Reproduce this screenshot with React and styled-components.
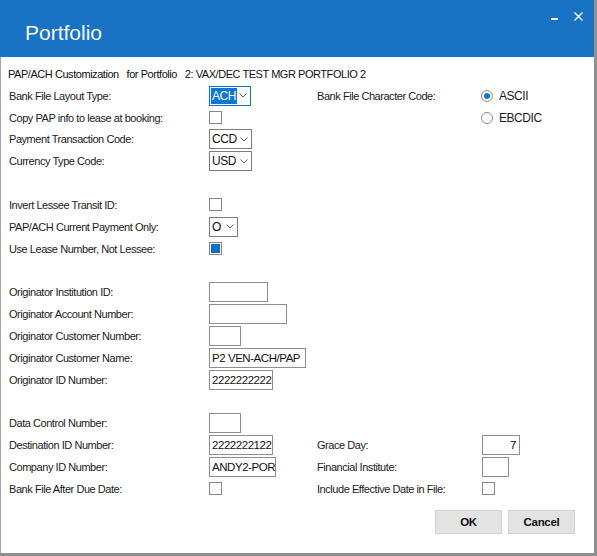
import React from 'react';
import styled, { createGlobalStyle } from 'styled-components';

const GlobalStyle = createGlobalStyle`
  html, body {
    margin: 0;
    padding: 0;
    background: #ffffff;
  }
  body {
    font-family: "Liberation Sans", Arial, sans-serif;
    font-size: 11px;
    letter-spacing: -0.45px;
    color: #1b1b1b;
  }
`;

const Window = styled.div`
  width: 597px;
  height: 556px;
  box-sizing: border-box;
  display: flex;
  flex-direction: column;
  border-right: 3px solid #8f8f8f;
  border-bottom: 3px solid #8f8f8f;
  background: #fff;
`;

const TitleBar = styled.div`
  height: 57px;
  flex: none;
  background: #1873c4;
  display: flex;
  justify-content: space-between;
  align-items: flex-start;
`;

const Title = styled.div`
  font-size: 21px;
  line-height: 24px;
  letter-spacing: 0;
  color: #f4f8fc;
  padding: 21px 0 0 25px;
`;

const WindowButtons = styled.div`
  display: flex;
  align-items: flex-start;
  gap: 16px;
  padding: 12px 11px 0 0;
`;

const Minimize = styled.span`
  display: block;
  width: 7px;
  height: 2px;
  margin-top: 6px;
  background: #ffffff;
`;

const Body = styled.div`
  flex: 1;
  border-left: 1px solid #a3a3a3;
  padding: 6px 19px 0 7px;
`;

const Row = styled.div`
  display: grid;
  grid-template-columns: 201px 107px 166px 1fr;
  align-items: center;
  height: 21.83px;
  white-space: nowrap;
`;

const HeaderLine = styled.div`
  display: flex;
  align-items: center;
  height: 21.83px;
  white-space: pre;
  color: #111;
`;

const Label = styled.span`
  padding-left: 1px;
`;

const SelectBox = styled.div`
  box-sizing: border-box;
  width: ${p => p.$w}px;
  height: 20px;
  border: 1px solid ${p => (p.$focused ? '#0a78d4' : '#7c7c7c')};
  display: flex;
  align-items: center;
  justify-content: space-between;
  padding: 0 3px 0 1px;
  background: #fff;
  font-size: 12px;
`;

const SelectValue = styled.span`
  line-height: 16px;
  padding: 0 1px;
  color: ${p => (p.$focused ? '#ffffff' : '#111')};
  background: ${p => (p.$focused ? '#0a78d4' : 'transparent')};
`;

const TextBox = styled.div`
  box-sizing: border-box;
  width: ${p => p.$w}px;
  height: 20px;
  border: 1px solid #8e8e8e;
  padding: 0 3px 0 2px;
  line-height: 18px;
  font-size: 11.5px;
  overflow: hidden;
  text-align: ${p => p.$align || 'left'};
  color: #111;
`;

const CheckBox = styled.div`
  box-sizing: border-box;
  width: 13px;
  height: 13px;
  border: 1px solid #8a8a8a;
  padding: 1px;
  background: #fff;
  &::after {
    content: '';
    display: ${p => (p.$checked ? 'block' : 'none')};
    width: 100%;
    height: 100%;
    background: #0f6ec6;
  }
`;

const RadioOption = styled.div`
  display: flex;
  align-items: center;
  gap: 6px;
  margin-left: -1px;
  font-size: 12px;
`;

const RadioCircle = styled.span`
  box-sizing: border-box;
  width: 12px;
  height: 12px;
  border-radius: 50%;
  border: 1px solid #8a8a8a;
  display: flex;
  align-items: center;
  justify-content: center;
  &::after {
    content: '';
    display: ${p => (p.$on ? 'block' : 'none')};
    width: 6px;
    height: 6px;
    border-radius: 50%;
    background: #0a78d4;
  }
`;

const ButtonBar = styled.div`
  display: flex;
  justify-content: flex-end;
  gap: 6px;
  margin-top: 10px;
`;

const Button = styled.button`
  box-sizing: border-box;
  width: 67px;
  height: 24px;
  background: #e3e3e3;
  border: 1px solid #d2d2d2;
  font-family: inherit;
  font-size: 11.5px;
  letter-spacing: -0.3px;
  font-weight: bold;
  color: #111;
  padding: 0;
`;

function Chevron() {
  return (
    <svg width="8" height="5" viewBox="0 0 8 5">
      <path d="M0.5 0.5 L4 4 L7.5 0.5" fill="none" stroke="#5f5f5f" strokeWidth="1" />
    </svg>
  );
}

function Select({ value, w, focused }) {
  return (
    <SelectBox $w={w} $focused={focused}>
      <SelectValue $focused={focused}>{value}</SelectValue>
      <Chevron />
    </SelectBox>
  );
}

function Radio({ on, children }) {
  return (
    <RadioOption>
      <RadioCircle $on={on} />
      <span>{children}</span>
    </RadioOption>
  );
}

function App() {
  return (
    <>
      <GlobalStyle />
      <Window>
        <TitleBar>
          <Title>Portfolio</Title>
          <WindowButtons>
            <Minimize />
            <svg width="9" height="9" viewBox="0 0 9 9">
              <path d="M0.5 0.5 L8.5 8.5 M8.5 0.5 L0.5 8.5" stroke="#fff" strokeWidth="1.4" />
            </svg>
          </WindowButtons>
        </TitleBar>
        <Body>
          <HeaderLine>{'PAP/ACH Customization   for Portfolio   2: VAX/DEC TEST MGR PORTFOLIO 2'}</HeaderLine>
          <Row>
            <Label>Bank File Layout Type:</Label>
            <Select value="ACH" w={42} focused />
            <Label>Bank File Character Code:</Label>
            <Radio on>ASCII</Radio>
          </Row>
          <Row>
            <Label>Copy PAP info to lease at booking:</Label>
            <CheckBox />
            <span />
            <Radio>EBCDIC</Radio>
          </Row>
          <Row>
            <Label>Payment Transaction Code:</Label>
            <Select value="CCD" w={43} />
          </Row>
          <Row>
            <Label>Currency Type Code:</Label>
            <Select value="USD" w={43} />
          </Row>
          <Row />
          <Row>
            <Label>Invert Lessee Transit ID:</Label>
            <CheckBox />
          </Row>
          <Row>
            <Label>PAP/ACH Current Payment Only:</Label>
            <Select value="O" w={29} />
          </Row>
          <Row>
            <Label>Use Lease Number, Not Lessee:</Label>
            <CheckBox $checked />
          </Row>
          <Row />
          <Row>
            <Label>Originator Institution ID:</Label>
            <TextBox $w={59} />
          </Row>
          <Row>
            <Label>Originator Account Number:</Label>
            <TextBox $w={78} />
          </Row>
          <Row>
            <Label>Originator Customer Number:</Label>
            <TextBox $w={32} />
          </Row>
          <Row>
            <Label>Originator Customer Name:</Label>
            <TextBox $w={97}>P2 VEN-ACH/PAP</TextBox>
          </Row>
          <Row>
            <Label>Originator ID Number:</Label>
            <TextBox $w={64}>2222222222</TextBox>
          </Row>
          <Row />
          <Row>
            <Label>Data Control Number:</Label>
            <TextBox $w={32} />
          </Row>
          <Row>
            <Label>Destination ID Number:</Label>
            <TextBox $w={64}>2222222122</TextBox>
            <Label>Grace Day:</Label>
            <TextBox $w={38} $align="right">7</TextBox>
          </Row>
          <Row>
            <Label>Company ID Number:</Label>
            <TextBox $w={67}>ANDY2-PORT</TextBox>
            <Label>Financial Institute:</Label>
            <TextBox $w={27} />
          </Row>
          <Row>
            <Label>Bank File After Due Date:</Label>
            <CheckBox />
            <Label>Include Effective Date in File:</Label>
            <CheckBox />
          </Row>
          <ButtonBar>
            <Button>OK</Button>
            <Button>Cancel</Button>
          </ButtonBar>
        </Body>
      </Window>
    </>
  );
}

export default App;
